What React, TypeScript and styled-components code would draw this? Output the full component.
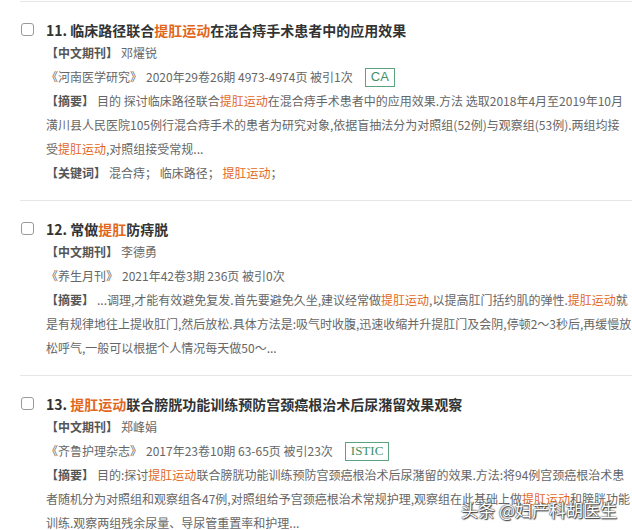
import React from "react";
import styled, { createGlobalStyle } from "styled-components";

type Part = string | { hl: string };

type Paper = {
  no: number;
  title: Part[];
  author: string;
  journal: string;
  info: string;
  tag?: { text: string; serif?: boolean };
  abstract: Part[][];
  keywords?: Part[];
};

const papers: Paper[] = [
  {
    no: 11,
    title: ["临床路径联合", { hl: "提肛运动" }, "在混合痔手术患者中的应用效果"],
    author: "邓燿锐",
    journal: "《河南医学研究》",
    info: "2020年29卷26期 4973-4974页 被引1次",
    tag: { text: "CA" },
    abstract: [
      ["目的 探讨临床路径联合", { hl: "提肛运动" }, "在混合痔手术患者中的应用效果.方法 选取2018年4月至2019年10月"],
      ["潢川县人民医院105例行混合痔手术的患者为研究对象,依据盲抽法分为对照组(52例)与观察组(53例).两组均接"],
      ["受", { hl: "提肛运动" }, ",对照组接受常规..."],
    ],
    keywords: ["混合痔； 临床路径； ", { hl: "提肛运动" }, "；"],
  },
  {
    no: 12,
    title: ["常做", { hl: "提肛" }, "防痔脱"],
    author: "李德勇",
    journal: "《养生月刊》",
    info: "2021年42卷3期 236页 被引0次",
    abstract: [
      ["...调理,才能有效避免复发.首先要避免久坐,建议经常做", { hl: "提肛运动" }, ",以提高肛门括约肌的弹性.", { hl: "提肛运动" }, "就"],
      ["是有规律地往上提收肛门,然后放松.具体方法是:吸气时收腹,迅速收缩并升提肛门及会阴,停顿2～3秒后,再缓慢放"],
      ["松呼气,一般可以根据个人情况每天做50～..."],
    ],
  },
  {
    no: 13,
    title: [{ hl: "提肛运动" }, "联合膀胱功能训练预防宫颈癌根治术后尿潴留效果观察"],
    author: "郑峰娟",
    journal: "《齐鲁护理杂志》",
    info: "2017年23卷10期 63-65页 被引23次",
    tag: { text: "ISTIC", serif: true },
    abstract: [
      ["目的:探讨", { hl: "提肛运动" }, "联合膀胱功能训练预防宫颈癌根治术后尿潴留的效果.方法:将94例宫颈癌根治术患"],
      ["者随机分为对照组和观察组各47例,对照组给予宫颈癌根治术常规护理,观察组在此基础上做", { hl: "提肛运动" }, "和膀胱功能"],
      ["训练.观察两组残余尿量、导尿管重置率和护理..."],
    ],
  },
];

const GlobalStyle = createGlobalStyle`
  html, body {
    margin: 0;
    background: #fff;
    overflow: hidden;
  }
  body {
    font-family: "Noto Sans CJK SC", "Noto Sans", sans-serif;
  }
`;

const Page = styled.div`
  position: relative;
  width: 632px;
  height: 530px;
  overflow: hidden;
  padding-top: 1px;
  box-sizing: border-box;
`;

const List = styled.div`
  padding-left: 20px;
`;

const Item = styled.div`
  display: grid;
  grid-template-columns: 26px 1fr;
  border-top: 1px solid #e6e6e6;
  padding: 17px 0 15px;
`;

const Check = styled.span`
  width: 13px;
  height: 13px;
  margin: 4px 0 0 1px;
  box-sizing: border-box;
  border: 1px solid #9a9a9a;
  border-radius: 3px;
  background: #fff;
`;

const Content = styled.div`
  min-width: 0;
`;

const Title = styled.div`
  font-size: 14px;
  line-height: 22px;
  font-weight: 700;
  color: #333;
  white-space: nowrap;
`;

const Hl = styled.span`
  color: #e2671c;
`;

const Line = styled.div`
  font-size: 12px;
  line-height: 24px;
  color: #666;
  white-space: nowrap;
  display: flex;
  align-items: center;
`;

const Label = styled.span`
  font-weight: 700;
  color: #555;
  margin-right: 3px;
`;

const Journal = styled.span`
  margin-right: 4px;
`;

const Tag = styled.span<{ $serif?: boolean }>`
  display: inline-flex;
  align-items: center;
  height: 19px;
  box-sizing: border-box;
  padding: 0 5px;
  margin-left: 12px;
  border: 1px solid #5aa37e;
  color: #3f9167;
  font-size: 13px;
  font-family: ${(p) =>
    p.$serif ? '"Liberation Serif", serif' : '"Liberation Sans", sans-serif'};
`;

const Watermark = styled.div`
  position: absolute;
  right: 15px;
  bottom: 9px;
  font-size: 17px;
  line-height: 22px;
  color: #fff;
  font-family: "Noto Sans CJK SC", sans-serif;
  text-shadow: 0 0 1px #333, 0 0 2px #333, 1px 1px 1px #444;
  white-space: pre;
`;

function Parts({ parts }: { parts: Part[] }) {
  return (
    <span>
      {parts.map((p, i) =>
        typeof p === "string" ? <span key={i}>{p}</span> : <Hl key={i}>{p.hl}</Hl>
      )}
    </span>
  );
}

function PaperItem({ paper }: { paper: Paper }) {
  return (
    <Item>
      <Check />
      <Content>
        <Title>
          {paper.no}. <Parts parts={paper.title} />
        </Title>
        <Line>
          <Label>【中文期刊】</Label>
          {paper.author}
        </Line>
        <Line>
          <Journal>{paper.journal}</Journal>
          {paper.info}
          {paper.tag && <Tag $serif={paper.tag.serif}>{paper.tag.text}</Tag>}
        </Line>
        {paper.abstract.map((row, i) => (
          <Line key={i}>
            {i === 0 && <Label>【摘要】</Label>}
            <Parts parts={row} />
          </Line>
        ))}
        {paper.keywords && (
          <Line>
            <Label>【关键词】</Label>
            <Parts parts={paper.keywords} />
          </Line>
        )}
      </Content>
    </Item>
  );
}

export default function App() {
  return (
    <Page>
      <GlobalStyle />
      <List>
        {papers.map((p) => (
          <PaperItem key={p.no} paper={p} />
        ))}
      </List>
      <Watermark>头条 @妇产科胡医生</Watermark>
    </Page>
  );
}
